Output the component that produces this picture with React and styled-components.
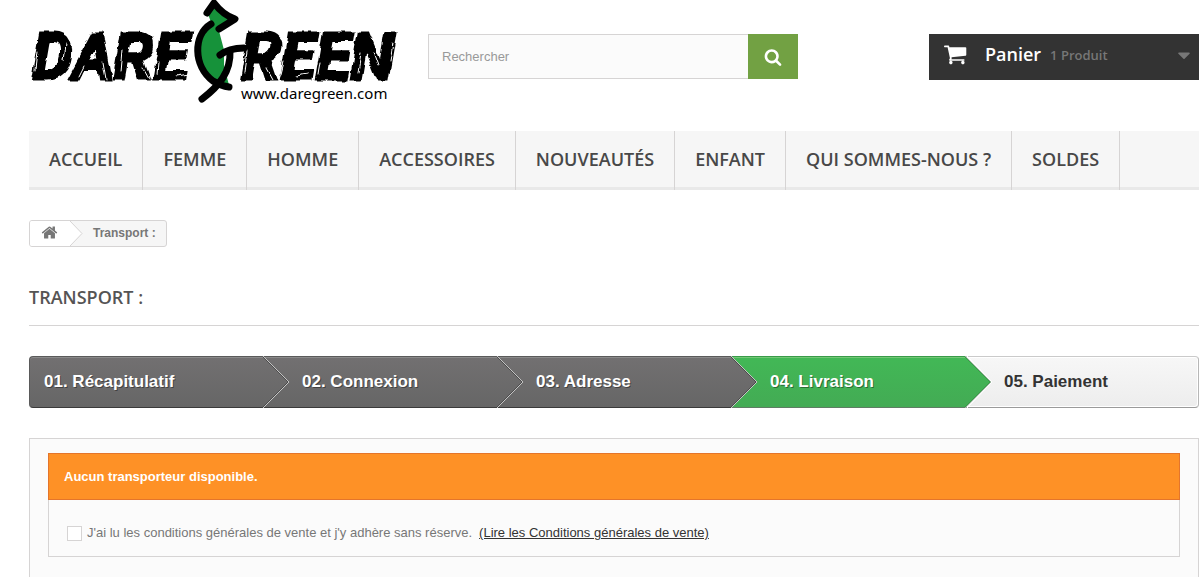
import styled, { createGlobalStyle } from 'styled-components';
import { FaCaretDown } from 'react-icons/fa';

const menu = ['Accueil', 'Femme', 'Homme', 'Accessoires', 'Nouveautés', 'Enfant', 'Qui sommes-nous ?', 'Soldes'];

const steps = [
    { label: '01. Récapitulatif', state: 'done' },
    { label: '02. Connexion', state: 'done' },
    { label: '03. Adresse', state: 'done' },
    { label: '04. Livraison', state: 'current' },
    { label: '05. Paiement', state: 'todo' },
];

const icons = {
    cart: 'M640 1536q0 52-38 90t-90 38-90-38-38-90 38-90 90-38 90 38 38 90zm896 0q0 52-38 90t-90 38-90-38-38-90 38-90 90-38 90 38 38 90zm128-1088v512q0 24-16.5 42.5t-40.5 21.5l-1044 122q13 60 13 70 0 16-24 64h920q26 0 45 19t19 45-19 45-45 19h-1024q-26 0-45-19t-19-45q0-11 8-31.5t16-36 21.5-40 15.5-29.5l-177-823h-204q-26 0-45-19t-19-45 19-45 45-19h256q16 0 28.5 6.5t19.5 15.5 13 24.5 8 26 5.5 29.5 4.5 26h1201q26 0 45 19t19 45z',
    home: 'M1472 992v480q0 26-19 45t-45 19h-384v-384h-256v384h-384q-26 0-45-19t-19-45v-480q0-1 .5-3t.5-3l575-474 575 474q1 2 1 6zm223-69l-62 74q-8 9-21 11h-3q-13 0-21-7l-692-577-692 577q-12 8-24 7-13-2-21-11l-62-74q-8-10-7-23.5t11-21.5l719-599q32-26 76-26t76 26l244 204v-195q0-14 9-23t23-9h192q14 0 23 9t9 23v408l219 182q10 8 11 21.5t-7 23.5z',
    search: 'M1216 832q0-185-131.5-316.5t-316.5-131.5-316.5 131.5-131.5 316.5 131.5 316.5 316.5 131.5 316.5-131.5 131.5-316.5zm512 832q0 52-38 90t-90 38q-54 0-90-38l-343-342q-179 124-399 124-143 0-273.5-55.5t-225-150-150-225-55.5-273.5 55.5-273.5 150-225 225-150 273.5-55.5 273.5 55.5 225 150 150 225 55.5 273.5q0 220-124 399l343 343q37 37 37 90z',
};

export default function App() {
    return (
        <>
            <GlobalStyle />
            <Page>
                <Header>
                    <Logo />
                    <SearchBox />
                    <Cart href='#panier'>
                        <Icon name='cart' size={24} />
                        <CartLabel>Panier</CartLabel>
                        <CartCount>1 Produit</CartCount>
                        <FaCaretDown size={20} />
                    </Cart>
                </Header>
                <Menu>
                    { menu.map((name) => <MenuLink href='#' key={name}>{name}</MenuLink>) }
                </Menu>
                <Breadcrumb>
                    <HomeLink href='#' aria-label='Accueil'>
                        <Icon name='home' size={17} />
                    </HomeLink>
                    <CrumbArrow viewBox='0 0 13 25' aria-hidden='true'>
                        <path d='M0 0 L12 12.5 L0 25 Z' fill='#fff' />
                        <path d='M0 0 L12 12.5 L0 25' fill='none' stroke='#d6d4d4' />
                    </CrumbArrow>
                    <CrumbText>Transport :</CrumbText>
                </Breadcrumb>
                <Title>Transport :</Title>
                <Steps>
                    { steps.map((step, i) => (
                        <Step key={step.label} $state={step.state}>
                            {step.label}
                            { i < steps.length - 1 && <StepArrow state={step.state} /> }
                        </Step>
                    )) }
                </Steps>
                <Carrier>
                    <Warning>Aucun transporteur disponible.</Warning>
                    <Terms>
                        <Checkbox type='checkbox' id='cgv' />
                        <label htmlFor='cgv'>J'ai lu les conditions générales de vente et j'y adhère sans réserve.</label>
                        <TermsLink href='#cgv'>(Lire les Conditions générales de vente)</TermsLink>
                    </Terms>
                </Carrier>
            </Page>
        </>
    );
}

function Icon({ name, size }) {
    return (
        <svg width={size} height={size} viewBox='0 0 1792 1792' fill='currentColor' aria-hidden='true'>
            <path d={icons[name]} />
        </svg>
    );
}

// shop logo: brush lettering around a leaf shaped G
function Logo() {
    return (
        <LogoLink href='#'>
            <svg width='370' height='104' viewBox='29 0 370 104' role='img' aria-label='Dare Green'>
                <defs>
                    <filter id='brush' x='-5%' y='-10%' width='110%' height='120%'>
                        <feTurbulence type='fractalNoise' baseFrequency='0.06 0.06' numOctaves='3' seed='7' />
                        <feDisplacementMap in='SourceGraphic' scale='6' xChannelSelector='R' yChannelSelector='G' />
                    </filter>
                </defs>
                <g filter='url(#brush)'>
                    <Lettering x='32' y='79'>DARE</Lettering>
                    <Lettering x='241' y='79'>REEN</Lettering>
                    <g fill='none' stroke='#fff' strokeLinecap='round'>
                        <path d='M37 52 L35 70 M66 44 L64 60 M84 66 L79 76 M102 62 L105 79' />
                        <path d='M123 50 L121 72 M143 68 L149 79 M158 62 L157 74 M176 76 L188 74' />
                        <path d='M247 50 L244 72 M267 68 L273 79 M284 62 L281 74 M320 62 L318 74' />
                        <path d='M296 76 L308 74 M361 54 L358 72 M374 52 L379 66 M392 44 L389 62' />
                    </g>
                </g>
                <path d='M208 14 L213 5 L235 19 L219 31 L224 50 L224 66 L229 85 L214 81 C194 68 192 38 212 25 Z' fill='#16923a' />
                <g fill='none' stroke='#000' strokeWidth='7' strokeLinecap='round' strokeLinejoin='round'>
                    <path d='M207 13 L214 3 Q223 15 235 19 L219 29' />
                    <path d='M211 24 C193 35 193 66 213 81 Q221 86 229 87' />
                    <path d='M244 48 Q229 48 220 55' />
                    <path d='M230 51 C231 72 219 86 202 99' />
                </g>
                <Site x='241' y='99'>www.daregreen.com</Site>
            </svg>
        </LogoLink>
    );
}

function SearchBox() {
    return (
        <SearchForm role='search' onSubmit={(e) => e.preventDefault()}>
            <SearchInput type='search' placeholder='Rechercher' aria-label='Rechercher' />
            <SearchButton type='submit' aria-label='Rechercher'>
                <Icon name='search' size={18} />
            </SearchButton>
        </SearchForm>
    );
}

const arrowColors = {
    done: { from: '#727071', to: '#666', line: '#c4c4c4', edge: '#4b4b4b', outer: 'none' },
    current: { from: '#42b856', to: '#43ab54', line: '#9cb59f', edge: '#399b49', outer: '#fff' },
};

function StepArrow({ state }) {
    const { from, to, line, edge, outer } = arrowColors[state];
    return (
        <Arrow viewBox='0 0 28 52' aria-hidden='true'>
            <linearGradient id={'arrow-' + state} x1='0' y1='0' x2='0' y2='1'>
                <stop offset='0' stopColor={from} />
                <stop offset='1' stopColor={to} />
            </linearGradient>
            <path d='M0 0 L26 26 L0 52 Z' fill={'url(#arrow-' + state + ')'} />
            <path d='M-1 0 L25 26 L-1 52' fill='none' stroke={edge} />
            <path d='M2 0 L27 26 L2 52' fill='none' stroke={outer} />
            <path d='M0 0 L26 26 L0 52' fill='none' stroke={line} />
        </Arrow>
    );
}

const GlobalStyle = createGlobalStyle`
    * {
        box-sizing: border-box;
    }

    body {
        margin: 0;
        background: #fff;
        color: #777;
        font: 13px/18px Arial, "Liberation Sans", sans-serif;
        overflow: hidden;
    }

    a {
        color: inherit;
        text-decoration: none;
    }
`;

const Page = styled.div`
    padding: 0 2px 0 29px;
`;

// header styles
const Header = styled.header`
    display: flex;
    align-items: flex-start;
    height: 131px;
`;

const LogoLink = styled.a`
    flex: none;
    margin-right: 29px;
`;

const Lettering = styled.text`
    font: italic 700 64px Roboto, "Liberation Sans", sans-serif;
    fill: #000;
    stroke: #000;
    stroke-width: 3px;
`;

const Site = styled.text`
    font: 15px "Noto Sans", sans-serif;
    fill: #000;
`;

const SearchForm = styled.form`
    display: flex;
    width: 370px;
    height: 45px;
    margin-top: 34px;
`;

const SearchInput = styled.input`
    flex: 1;
    min-width: 0;
    padding: 0 13px;
    border: 1px solid #d6d4d4;
    border-right: 0;
    border-radius: 0;
    background: #fbfbfb;
    color: #686666;
    font: inherit;
    appearance: none;

    &::placeholder {
        color: #999;
    }
`;

const SearchButton = styled.button`
    display: flex;
    align-items: center;
    justify-content: center;
    width: 50px;
    padding: 0;
    border: 0;
    background: #72a143;
    color: #fff;
`;

const Cart = styled.a`
    display: flex;
    align-items: center;
    width: 270px;
    height: 46px;
    margin: 34px 0 0 auto;
    padding: 0 5px 7px 15px;
    background: #333;
    color: #fff;

    svg:last-child {
        margin: 3px 0 0 auto;
        color: #777;
    }
`;

const CartLabel = styled.span`
    margin-left: 17px;
    font: 600 18px/22px "Open Sans", sans-serif;
`;

const CartCount = styled.span`
    margin-left: 9px;
    padding-top: 3px;
    color: #777;
    font: 600 13px/22px "Open Sans", sans-serif;
`;

// menu styles
const Menu = styled.nav`
    display: flex;
    border-bottom: 3px solid #e9e9e9;
    background: #f6f6f6;
`;

const MenuLink = styled.a`
    margin-bottom: -3px;
    padding: 17px 20px 20px;
    border-right: 1px solid #d6d4d4;
    color: #484848;
    font: 600 18px/22px "Open Sans", sans-serif;
    text-transform: uppercase;
`;

// breadcrumb and title styles
const Breadcrumb = styled.nav`
    display: inline-flex;
    align-items: stretch;
    height: 27px;
    margin-top: 30px;
    border: 1px solid #d6d4d4;
    border-radius: 3px;
    background: #f6f6f6;
    overflow: hidden;
    vertical-align: top;
`;

const HomeLink = styled.a`
    display: flex;
    align-items: center;
    width: 40px;
    padding: 0 0 2px 11px;
    background: #fff;
`;

const CrumbArrow = styled.svg`
    width: 13px;
    height: 25px;
`;

const CrumbText = styled.span`
    padding: 0 10px;
    font-size: 12px;
    font-weight: bold;
    line-height: 24px;
`;

const Title = styled.h1`
    margin: 39px 0 30px;
    padding-bottom: 17px;
    border-bottom: 1px solid #d6d4d4;
    color: #555454;
    font: 600 18px/22px "Open Sans", sans-serif;
    text-transform: uppercase;
`;

// order steps styles
const Steps = styled.ol`
    display: grid;
    grid-template-columns: repeat(5, 1fr);
    margin: 0 0 30px;
    padding: 0;
    list-style: none;
`;

const stepLook = {
    done: `
        border-color: #5a5a5a #5a5a5a #3a3a3a;
        background: linear-gradient(#727071, #666);
        box-shadow: inset 0 1px #8a8a8a;
        color: #fff;
        text-shadow: 1px 1px rgba(0, 0, 0, 0.4);
    `,
    current: `
        border-color: #399b49 #399b49 #5f7d64;
        background: linear-gradient(#42b856, #43ab54);
        box-shadow: inset 0 1px #74c776;
        color: #fff;
        text-shadow: 1px 1px rgba(0, 0, 0, 0.4);
    `,
    todo: `
        border-color: #cacaca #b7b7b7 #9a9a9a;
        background: linear-gradient(#f7f7f7, #ededed);
        box-shadow: inset 0 1px #fff, inset -1px -1px #fff;
        color: #333;
    `,
};

const Step = styled.li`
    position: relative;
    height: 52px;
    padding-left: 39px;
    border: solid;
    border-width: 1px 0;
    font-size: 17px;
    font-weight: bold;
    line-height: 49px;
    ${({ $state }) => stepLook[$state]}

    &:first-child {
        padding-left: 14px;
        border-left-width: 1px;
        border-radius: 4px 0 0 4px;
    }

    &:last-child {
        border-right-width: 1px;
        border-radius: 0 4px 4px 0;
    }
`;

// point that lies over the start of the next step
const Arrow = styled.svg`
    position: absolute;
    z-index: 1;
    top: -1px;
    left: 100%;
    width: 28px;
    height: 52px;
`;

// carrier styles
const Carrier = styled.section`
    padding: 14px 18px 40px;
    border: 1px solid #d6d4d4;
    background: #fbfbfb;
`;

const Warning = styled.p`
    margin: 0;
    padding: 14px 15px 13px;
    border: 1px solid #e4752b;
    background: #fe9126;
    color: #fff;
    font-weight: bold;
`;

const Terms = styled.div`
    display: flex;
    align-items: center;
    padding: 24px 18px 14px;
    border: 1px solid #d6d4d4;
    border-top: 0;
`;

const Checkbox = styled.input`
    appearance: none;
    width: 15px;
    height: 15px;
    margin: 0 5px 0 0;
    border: 1px solid #d6d4d4;
    background: #fff;
`;

const TermsLink = styled.a`
    margin-left: 7px;
    color: #333;
    text-decoration: underline;
`;
